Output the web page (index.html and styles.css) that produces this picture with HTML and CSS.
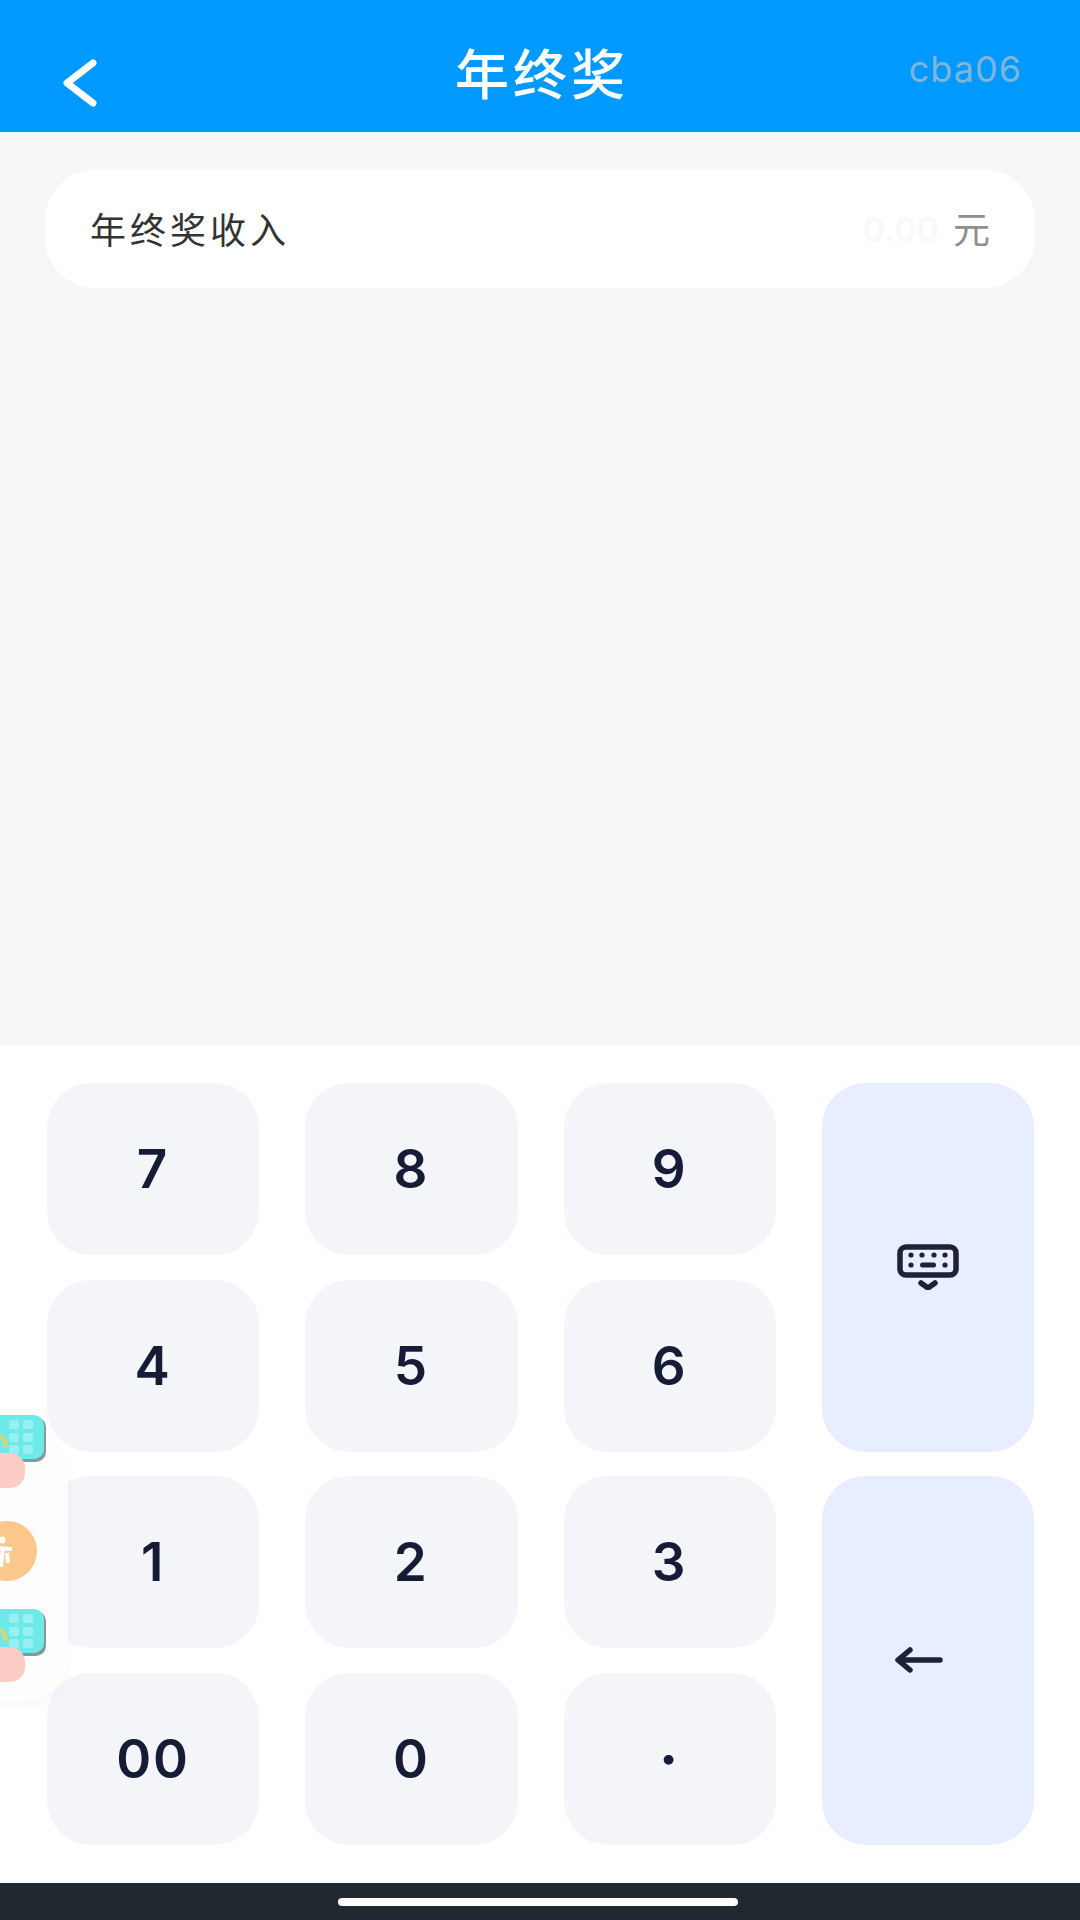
FILE: index.html
```html
<!DOCTYPE html>
<html lang="zh-CN">

<head>
    <meta charset="UTF-8">
    <meta name="viewport" content="width=device-width, initial-scale=1.0">
    <title>年终奖</title>
    <link rel="stylesheet" href="styles.css">
</head>

<body>
    <div class="app">
        <header class="topbar">
            <svg class="back-icon" viewBox="0 0 36 48" width="36" height="48">
                <path d="M31 4 L5 24 L31 44" />
            </svg>
            <h1 class="topbar-title">年终奖</h1>
            <span class="topbar-user">cba06</span>
        </header>

        <main class="content">
            <div class="field">
                <span class="field-label">年终奖收入</span>
                <span class="field-value">0.00</span>
                <span class="field-unit">元</span>
            </div>
        </main>

        <section class="keypad">
            <button class="key">7</button>
            <button class="key">8</button>
            <button class="key">9</button>
            <button class="key key-side">
                <svg viewBox="0 0 62 46" width="62" height="46">
                    <rect x="3" y="3" width="56" height="28" rx="6" class="icon-line" />
                    <circle cx="14" cy="11" r="2.6" />
                    <circle cx="25" cy="11" r="2.6" />
                    <circle cx="37" cy="11" r="2.6" />
                    <circle cx="48" cy="11" r="2.6" />
                    <circle cx="14" cy="21" r="2.6" />
                    <rect x="23" y="18.5" width="16" height="5" rx="2.5" />
                    <circle cx="48" cy="21" r="2.6" />
                    <path d="M24 39 L31 44 L38 39" class="icon-line" />
                </svg>
            </button>
            <button class="key">4</button>
            <button class="key">5</button>
            <button class="key">6</button>
            <button class="key">1</button>
            <button class="key">2</button>
            <button class="key">3</button>
            <button class="key key-side">
                <svg class="arrow-icon" viewBox="0 0 48 26" width="48" height="26">
                    <path d="M45 13 H4 M15 3 L3 13 L15 23" class="icon-line" />
                </svg>
            </button>
            <button class="key">00</button>
            <button class="key">0</button>
            <button class="key key-dot">·</button>
        </section>

        <footer class="navbar">
            <div class="home-bar"></div>
        </footer>

        <aside class="float-menu">
            <svg viewBox="0 0 68 297" width="68" height="297">
                <defs>
                    <g id="pad-icon">
                        <rect x="-20" y="12" width="66" height="45" rx="10" fill="#85989b" />
                        <rect x="-20" y="10" width="64" height="44" rx="10" fill="#6ee9ea" />
                        <g fill="#97f1f3">
                            <rect x="9" y="15" width="10" height="9" rx="2" />
                            <rect x="23" y="15" width="10" height="9" rx="2" />
                            <rect x="9" y="28" width="10" height="9" rx="2" />
                            <rect x="23" y="28" width="10" height="9" rx="2" />
                            <rect x="9" y="40" width="10" height="9" rx="2" />
                            <rect x="23" y="40" width="10" height="9" rx="2" />
                        </g>
                        <path d="M0 31 Q5 33 6 42" fill="none" stroke="#d9d86a" stroke-width="4" />
                        <rect x="-24" y="48" width="49" height="35" rx="15" fill="#fbcdc5" />
                    </g>
                </defs>
                <use href="#pad-icon" />
                <circle cx="7" cy="146" r="30" fill="#fbc78a" />
                <circle cx="2" cy="135" r="3.5" fill="#fff" />
                <path d="M-3 143 L12 144 M3 142 L1 162 M7 148 L8 158" stroke="#fff" stroke-width="4" fill="none" />
                <use href="#pad-icon" y="194" />
            </svg>
        </aside>
    </div>
</body>

</html>
```

FILE: styles.css
```css
* {
    box-sizing: border-box;
}

body {
    margin: 0;
    font-family: "Noto Sans CJK SC", "Noto Sans", sans-serif;
    background-color: #fff;
}

.app {
    position: relative;
    display: flex;
    flex-direction: column;
    width: 1080px;
    height: 1920px;
    overflow: hidden;
}

.topbar {
    display: grid;
    flex: none;
    grid-template-columns: 1fr auto 1fr;
    align-items: center;
    height: 132px;
    padding: 0 58px 0 62px;
    background-color: #0099ff;
}

.back-icon {
    margin-top: 34px;
}

.back-icon path {
    fill: none;
    stroke: #fff;
    stroke-width: 7;
    stroke-linecap: round;
    stroke-linejoin: round;
}

.topbar-title {
    margin: 10px 0 0;
    color: #fff;
    font-size: 54px;
    font-weight: 500;
    letter-spacing: 4px;
}

.topbar-user {
    justify-self: end;
    margin-top: 6px;
    color: #7fb5d8;
    font-family: Inter, sans-serif;
    font-size: 36px;
    letter-spacing: 1px;
}

.content {
    flex: 1;
    padding: 38px 45px;
    background-color: #f7f7f8;
}

.field {
    display: flex;
    align-items: center;
    height: 118px;
    padding: 0 45px;
    background-color: #fff;
    border-radius: 50px;
}

.field-label {
    flex: 1;
    margin-top: -3px;
    color: #333;
    font-size: 36px;
    letter-spacing: 4px;
}

.field-value {
    margin-right: 14px;
    color: #f8f9fa;
    font-family: Inter, sans-serif;
    font-size: 34px;
    font-weight: 600;
}

.field-unit {
    margin-top: -3px;
    color: #8f8f8f;
    font-size: 37px;
}

.keypad {
    display: grid;
    flex: none;
    grid-template-columns: repeat(4, 212.25px);
    grid-template-rows: repeat(4, 172px);
    column-gap: 46px;
    row-gap: 24.5px;
    height: 838px;
    padding: 38px 0 0 47px;
}

.key {
    display: flex;
    align-items: center;
    justify-content: center;
    padding: 0;
    color: #171c36;
    background-color: #f3f5f9;
    border: none;
    border-radius: 44px;
    font-family: Inter, sans-serif;
    font-size: 53px;
    font-weight: 600;
    letter-spacing: 2px;
}

.key-side {
    grid-column: 4;
    grid-row: span 2;
    background-color: #e6eeff;
}

.key-side svg {
    fill: #1d2238;
}

.key-dot {
    font-weight: 800;
}

.icon-line {
    fill: none;
    stroke: #1d2238;
    stroke-width: 5.5;
    stroke-linecap: round;
    stroke-linejoin: round;
}

.arrow-icon {
    margin-right: 17px;
}

.navbar {
    display: flex;
    flex: none;
    align-items: center;
    justify-content: center;
    height: 37px;
    background-color: #212830;
}

.home-bar {
    width: 400px;
    height: 8px;
    margin-right: 5px;
    background-color: #fff;
    border-radius: 4px;
}

/* floating shortcut panel over the left edge of the keypad */
.float-menu {
    position: absolute;
    left: 0;
    top: 1405px;
    width: 68px;
    height: 297px;
}

.float-menu::before {
    content: "";
    position: absolute;
    left: 0;
    top: 42px;
    width: 68px;
    bottom: 0;
    background-color: #fdfdfd;
    border-radius: 0 24px 44px 0;
    box-shadow: 0 3px 8px rgba(120, 130, 150, .08);
}

.float-menu svg {
    position: relative;
    display: block;
}
```
